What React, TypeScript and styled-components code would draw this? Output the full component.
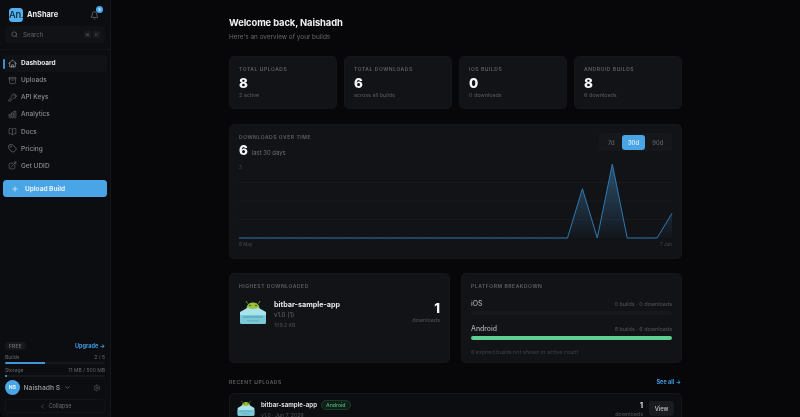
import React from "react";
import styled, { createGlobalStyle } from "styled-components";
import { Search, Bell, Plus, ChevronDown, ChevronLeft, Tag } from "lucide-react";
import {
  HiOutlineHome,
  HiOutlineArchiveBox,
  HiOutlineKey,
  HiOutlineChartBar,
  HiOutlineBookOpen,
  HiOutlineArrowTopRightOnSquare,
  HiOutlineCog6Tooth,
} from "react-icons/hi2";

const Global = createGlobalStyle`
  html, body { margin: 0; padding: 0; background: #070709; overflow: hidden; height: 100%; }
  #root { height: 100%; }
  * { box-sizing: border-box; }
  body { font-family: Inter, "Noto Sans", sans-serif; -webkit-font-smoothing: antialiased; }
`;

const Shell = styled.div`
  display: flex;
  width: 800px;
  height: 417px;
  overflow: hidden;
  background: #070709;
  filter: blur(0.3px);
`;

const Sidebar = styled.aside`
  width: 111px;
  flex: none;
  height: 417px;
  display: flex;
  flex-direction: column;
  background: #0c0d10;
  border-right: 1px solid #15161a;
  border-bottom-left-radius: 6px;
`;

const Brand = styled.div`
  display: flex;
  align-items: center;
  height: 26px;
  padding: 3px 8px 0 9px;
  gap: 4px;
`;

const Logo = styled.div`
  width: 14px;
  height: 14px;
  border-radius: 3.5px;
  background: #55b0ee;
  color: #0b2236;
  font-size: 9.5px;
  font-weight: 500;
  line-height: 14px;
  text-align: center;
  letter-spacing: -0.3px;
`;

const BrandName = styled.span`
  flex: 1;
  color: #e8e8ea;
  font-size: 7.4px;
  font-weight: 700;
`;

const BellWrap = styled.div`
  position: relative;
  width: 9px;
  height: 9px;
  margin: 2px 3px 0 0;
  color: #6f7177;
  display: flex;
`;

const BellBadge = styled.span`
  position: absolute;
  top: -5px;
  right: -4px;
  width: 7px;
  height: 7px;
  border-radius: 50%;
  background: #4aa8ea;
  color: #e8f4fd;
  font-size: 4px;
  line-height: 7px;
  text-align: center;
  font-weight: 600;
`;

const SearchBox = styled.div`
  margin: 0 5px;
  height: 17px;
  display: flex;
  align-items: center;
  padding: 0 5px 0 6px;
  gap: 5px;
  background: #111216;
  border-radius: 4px;
  color: #7c7e84;
`;

const SearchLabel = styled.span`
  flex: 1;
  font-size: 6.2px;
  color: #5f6167;
`;

const Kbd = styled.span`
  width: 7px;
  height: 7px;
  margin-left: -3px;
  border-radius: 1.5px;
  background: #1a1b20;
  color: #55575c;
  font-size: 4px;
  line-height: 7px;
  text-align: center;
`;

const Divider = styled.div`
  height: 1px;
  margin-top: 6px;
  background: #14151a;
`;

const Nav = styled.nav`
  display: flex;
  flex-direction: column;
  padding: 4.5px 3px 0;
`;

const NavItem = styled.div<{ $active?: boolean }>`
  position: relative;
  height: 17.15px;
  display: flex;
  align-items: center;
  gap: 4px;
  padding-left: 5px;
  border-radius: 4px;
  font-size: 6.5px;
  font-weight: ${(p) => (p.$active ? 700 : 500)};
  color: ${(p) => (p.$active ? "#e6e6e8" : "#8a8c92")};
  background: ${(p) => (p.$active ? "#111216" : "transparent")};
  svg { width: 9px; height: 9px; flex: none; color: ${(p) => (p.$active ? "#c8c9cd" : "#72747a")}; }
`;

const ActiveMark = styled.span`
  position: absolute;
  left: 0;
  top: 4px;
  bottom: 3px;
  width: 1.5px;
  border-radius: 1px;
  background: #3d8fd0;
`;

const UploadButton = styled.button`
  margin: 6px 3px 0;
  height: 17px;
  border: none;
  border-radius: 3.5px;
  background: #4aa5e6;
  color: #e4f2fc;
  display: flex;
  align-items: center;
  gap: 6px;
  padding: 0 0 0 8px;
  font: 700 6.5px Inter, sans-serif;
`;

const SidebarFoot = styled.div`
  margin-top: auto;
  padding: 0 5px 4px;
  display: flex;
  flex-direction: column;
`;

const PlanRow = styled.div`
  display: flex;
  align-items: center;
  justify-content: space-between;
  height: 8px;
  margin-bottom: 4px;
`;

const PlanPill = styled.span`
  background: #17181c;
  color: #6c6e73;
  font-size: 4.8px;
  font-weight: 600;
  letter-spacing: 0.3px;
  line-height: 8px;
  padding: 0 4px;
  border-radius: 4px;
`;

const UpgradeLink = styled.span`
  color: #3f97d8;
  font-size: 5.6px;
  font-weight: 700;
`;

const MeterRow = styled.div`
  display: flex;
  justify-content: space-between;
  font-size: 5px;
  line-height: 7px;
  color: #67696e;
`;

const MeterTrack = styled.div`
  height: 2px;
  margin: 1px 0 3px;
  background: #17181d;
  border-radius: 1px;
  overflow: hidden;
`;

const MeterFill = styled.div`
  height: 100%;
  background: #3f97d8;
`;

const UserRow = styled.div`
  display: flex;
  align-items: center;
  height: 15px;
  margin-top: 0;
  gap: 3.5px;
  color: #85878c;
`;

const Avatar = styled.div`
  width: 15px;
  height: 15px;
  border-radius: 50%;
  background: #4aa5e6;
  color: #e4f2fc;
  font-size: 5.2px;
  font-weight: 700;
  line-height: 15px;
  text-align: center;
`;

const UserName = styled.span`
  font-size: 6.7px;
  font-weight: 600;
  color: #8c8e93;
`;

const CogSlot = styled.span`
  margin: 0 4px 0 auto;
  display: flex;
  color: #64666b;
`;

const CollapseButton = styled.div`
  margin-top: 4px;
  height: 14px;
  border: 1px solid #14151a;
  border-radius: 3.5px;
  display: flex;
  align-items: center;
  justify-content: center;
  gap: 3px;
  color: #6a6c71;
  font-size: 5.6px;
`;

const Main = styled.main`
  flex: 1;
  display: flex;
  justify-content: center;
`;

const Content = styled.div`
  width: 453px;
  padding-top: 16px;
  display: flex;
  flex-direction: column;
  & > * { flex: none; }
`;

const Title = styled.h1`
  margin: 0;
  color: #f0f0f2;
  font-size: 9.4px;
  line-height: 14px;
  font-weight: 700;
  letter-spacing: -0.1px;
`;

const Subtitle = styled.p`
  margin: 3px 0 0;
  color: #66686d;
  font-size: 6.4px;
  line-height: 9px;
`;

const StatGrid = styled.div`
  display: grid;
  grid-template-columns: repeat(4, 1fr);
  gap: 7px;
  margin-top: 14px;
`;

const Card = styled.section`
  background: #121317;
  border: 1px solid #15161a;
  border-radius: 5px;
`;

const StatCard = styled(Card)`
  height: 53px;
  padding: 9px 9px 0;
`;

const Eyebrow = styled.div`
  color: #5f6166;
  font-size: 5px;
  line-height: 7px;
  font-weight: 600;
  letter-spacing: 0.55px;
  text-transform: uppercase;
`;

const StatValue = styled.div`
  color: #f6f6f7;
  font-size: 13.4px;
  line-height: 16px;
  font-weight: 800;
  margin-top: 2px;
`;

const StatNote = styled.div`
  color: #5b5d62;
  font-size: 5.4px;
  line-height: 7px;
  margin-top: 1px;
`;

const ChartCard = styled(Card)`
  margin-top: 15px;
  height: 135px;
  padding: 9px 9px 0;
  position: relative;
`;

const ChartHead = styled.div`
  display: flex;
  justify-content: space-between;
  align-items: flex-start;
  height: 31px;
`;

const ChartTotals = styled.div`
  display: flex;
  align-items: baseline;
  gap: 4px;
  margin-top: -1px;
`;

const ChartSuffix = styled.span`
  color: #6d6f74;
  font-size: 5.9px;
`;

const RangeGroup = styled.div`
  display: grid;
  grid-template-columns: 21.5px 23px 25.5px;
  padding: 1.5px;
  margin: -1px 0 0;
  background: #16171b;
  border-radius: 4px;
`;

const RangeOption = styled.span<{ $active?: boolean }>`
  height: 15px;
  border-radius: 3px;
  text-align: center;
  font-size: 5.8px;
  line-height: 15px;
  font-weight: ${(p) => (p.$active ? 600 : 500)};
  color: ${(p) => (p.$active ? "#d6ebfa" : "#5f6166")};
  background: ${(p) => (p.$active ? "#4aa5e6" : "transparent")};
`;

const ChartSvg = styled.svg`
  display: block;
  width: 433px;
  height: 83px;
  margin-top: 0;
  overflow: visible;
`;

const AxisLabel = styled.span`
  position: absolute;
  color: #46484d;
  font-size: 4.6px;
  line-height: 6px;
`;

const AxisTop = styled(AxisLabel)`
  left: 9px;
  top: 40px;
`;

const AxisStart = styled(AxisLabel)`
  left: 9px;
  bottom: 10px;
`;

const AxisEnd = styled(AxisLabel)`
  right: 9px;
  bottom: 10px;
`;

const TwoCol = styled.div`
  display: grid;
  grid-template-columns: 221px 221px;
  justify-content: space-between;
  margin-top: 14px;
`;

const PanelCard = styled(Card)`
  height: 90px;
  padding: 9px 9px 0;
`;

const TopApp = styled.div`
  display: flex;
  align-items: flex-start;
  margin-top: 8px;
  gap: 7px;
`;

const TopAppInfo = styled.div`
  flex: 1;
  display: flex;
  flex-direction: column;
  padding-top: 2px;
`;

const AppName = styled.div`
  color: #e8e8ea;
  font-size: 7.2px;
  line-height: 10px;
  font-weight: 700;
`;

const AppVersion = styled.div`
  color: #63656a;
  font-size: 6.2px;
  line-height: 10px;
`;

const AppSize = styled.div`
  color: #4c4e53;
  font-size: 5.2px;
  line-height: 10px;
`;

const TopCount = styled.div`
  text-align: right;
  margin-top: 3px;
`;

const CountBig = styled.div`
  color: #f6f6f7;
  font-size: 13px;
  line-height: 15px;
  font-weight: 800;
`;

const CountNote = styled.div`
  color: #55575c;
  font-size: 5.4px;
  line-height: 8px;
`;

const PlatformRow = styled.div`
  display: flex;
  justify-content: space-between;
  align-items: baseline;
  margin-top: 8.5px;
  font-size: 5.4px;
  line-height: 9px;
  color: #55575c;
`;

const PlatformName = styled.span`
  color: #a8aaaf;
  font-size: 6.9px;
  font-weight: 500;
`;

const BarTrack = styled.div`
  height: 4px;
  margin-top: 2.5px;
  background: #17181c;
  border-radius: 2px;
`;

const BarFill = styled.div`
  height: 100%;
  background: #5fce90;
  border-radius: 2px;
`;

const Footnote = styled.div`
  margin-top: 9px;
  color: #3f4146;
  font-size: 5.4px;
  line-height: 7px;
`;

const SectionHead = styled.div`
  display: flex;
  justify-content: space-between;
  align-items: center;
  margin-top: 15px;
  height: 8px;
`;

const SeeAll = styled.span`
  color: #3f97d8;
  font-size: 5.6px;
  font-weight: 700;
  margin-right: 1px;
`;

const RecentRow = styled(Card)`
  margin-top: 7px;
  height: 40px;
  padding: 5px 7px 0 7px;
  display: flex;
  align-items: flex-start;
  gap: 6px;
  border-radius: 5px 5px 0 0;
  background: #0c0d10;
`;

const RecentInfo = styled.div`
  flex: 1;
`;

const RecentTitle = styled.div`
  display: flex;
  align-items: center;
  gap: 4px;
  height: 11px;
`;

const RecentName = styled.span`
  color: #dcdcde;
  font-size: 6.1px;
  font-weight: 700;
`;

const Badge = styled.span`
  border: 1px solid #173a29;
  background: #0f1f18;
  color: #49b67c;
  font-size: 5.2px;
  font-weight: 500;
  line-height: 8px;
  padding: 0 4px;
  border-radius: 5px;
`;

const RecentMeta = styled.div`
  color: #4f5156;
  font-size: 5.2px;
  line-height: 8px;
  margin-top: 1px;
`;

const RecentCount = styled.div`
  text-align: right;
  margin-top: 2px;
`;

const RecentNum = styled.div`
  color: #e8e8ea;
  font-size: 7px;
  font-weight: 700;
  line-height: 9px;
`;

const ViewButton = styled.div`
  width: 25px;
  height: 15px;
  background: #1a1b1f;
  border-radius: 3px;
  color: #c4c5c8;
  font-size: 5.8px;
  font-weight: 500;
  line-height: 15px;
  text-align: center;
  margin-top: 2px;
`;

function AppIcon({ size }: { size: number }) {
  return (
    <svg width={size} height={size} viewBox="0 0 28 28" style={{ flex: "none" }}>
      <path d="M8.5 5.5 L7 3 M19.5 5.5 L21 3" stroke="#8fb83a" strokeWidth="0.8" />
      <path d="M7.5 11 C7.5 6.5 10.5 4.5 14 4.5 C17.5 4.5 20.5 6.5 20.5 11 Z" fill="#97c23c" />
      <circle cx="11" cy="7.5" r="0.8" fill="#30400f" />
      <circle cx="17" cy="7.5" r="0.8" fill="#30400f" />
      <path d="M1 14 L9 9.5 Q14 12.5 19 9.5 L27 14 L27 24 Q27 26 25 26 L3 26 Q1 26 1 24 Z" fill="#a8e2ea" />
      <path d="M1 17 H27 V24 Q27 26 25 26 H3 Q1 26 1 24 Z" fill="#7cc8d6" />
      <rect x="4" y="18" width="20" height="2" fill="#5ba8b6" opacity="0.7" />
      <rect x="8" y="22" width="12" height="1.4" fill="#5ba8b6" opacity="0.6" />
    </svg>
  );
}

const navItems = [
  { label: "Dashboard", icon: <HiOutlineHome />, active: true },
  { label: "Uploads", icon: <HiOutlineArchiveBox /> },
  { label: "API Keys", icon: <HiOutlineKey /> },
  { label: "Analytics", icon: <HiOutlineChartBar /> },
  { label: "Docs", icon: <HiOutlineBookOpen /> },
  { label: "Pricing", icon: <Tag /> },
  { label: "Get UDID", icon: <HiOutlineArrowTopRightOnSquare /> },
];

const stats = [
  { label: "Total Uploads", value: "8", note: "2 active" },
  { label: "Total Downloads", value: "6", note: "across all builds" },
  { label: "iOS Builds", value: "0", note: "0 downloads" },
  { label: "Android Builds", value: "8", note: "6 downloads" },
];

// 30 daily values across the 433px plot
const series = [...Array(23).fill(0), 2, 0, 3, 0, 0, 0, 1];
const step = 433 / 29;
const baseY = 73;
const unit = 24.67;
const linePoints = series.map((v, i) => `${(i * step).toFixed(1)},${(baseY - v * unit).toFixed(1)}`);
const linePath = "M" + linePoints.join(" L");
const areaPath = `${linePath} L433,${baseY} L0,${baseY} Z`;

export default function App() {
  return (
    <Shell>
      <Global />
      <Sidebar>
        <Brand>
          <Logo>An.</Logo>
          <BrandName>AnShare</BrandName>
          <BellWrap>
            <Bell size={9} />
            <BellBadge>5</BellBadge>
          </BellWrap>
        </Brand>
        <SearchBox>
          <Search size={7} />
          <SearchLabel>Search</SearchLabel>
          <Kbd>⌘</Kbd>
          <Kbd>K</Kbd>
        </SearchBox>
        <Divider />
        <Nav>
          {navItems.map((n) => (
            <NavItem key={n.label} $active={n.active}>
              {n.active && <ActiveMark />}
              {n.icon}
              {n.label}
            </NavItem>
          ))}
        </Nav>
        <UploadButton>
          <Plus size={8} />
          Upload Build
        </UploadButton>
        <SidebarFoot>
          <PlanRow>
            <PlanPill>FREE</PlanPill>
            <UpgradeLink>Upgrade →</UpgradeLink>
          </PlanRow>
          <MeterRow>
            <span>Builds</span>
            <span>2 / 5</span>
          </MeterRow>
          <MeterTrack>
            <MeterFill style={{ width: "40%" }} />
          </MeterTrack>
          <MeterRow>
            <span>Storage</span>
            <span>11 MB / 500 MB</span>
          </MeterRow>
          <MeterTrack>
            <MeterFill style={{ width: "2.2%" }} />
          </MeterTrack>
          <UserRow>
            <Avatar>NS</Avatar>
            <UserName>Naishadh S</UserName>
            <ChevronDown size={7} />
            <CogSlot>
              <HiOutlineCog6Tooth size={8} />
            </CogSlot>
          </UserRow>
          <CollapseButton>
            <ChevronLeft size={7} />
            Collapse
          </CollapseButton>
        </SidebarFoot>
      </Sidebar>
      <Main>
        <Content>
          <Title>Welcome back, Naishadh</Title>
          <Subtitle>Here's an overview of your builds</Subtitle>
          <StatGrid>
            {stats.map((s) => (
              <StatCard key={s.label}>
                <Eyebrow>{s.label}</Eyebrow>
                <StatValue>{s.value}</StatValue>
                <StatNote>{s.note}</StatNote>
              </StatCard>
            ))}
          </StatGrid>
          <ChartCard>
            <ChartHead>
              <div>
                <Eyebrow>Downloads over time</Eyebrow>
                <ChartTotals>
                  <StatValue as="span">6</StatValue>
                  <ChartSuffix>last 30 days</ChartSuffix>
                </ChartTotals>
              </div>
              <RangeGroup>
                <RangeOption>7d</RangeOption>
                <RangeOption $active>30d</RangeOption>
                <RangeOption>90d</RangeOption>
              </RangeGroup>
            </ChartHead>
            <AxisTop>3</AxisTop>
            <ChartSvg viewBox="0 0 433 83">
              <defs>
                <linearGradient id="area" x1="0" y1="0" x2="0" y2="1">
                  <stop offset="0" stopColor="#4aa5e6" stopOpacity="0.42" />
                  <stop offset="1" stopColor="#4aa5e6" stopOpacity="0.02" />
                </linearGradient>
              </defs>
              {[17.5, 36, 54.5].map((y) => (
                <line key={y} x1="0" x2="433" y1={y} y2={y} stroke="#1b1c21" strokeWidth="0.7" />
              ))}
              <path d={areaPath} fill="url(#area)" />
              <path d={linePath} fill="none" stroke="#2f78b0" strokeWidth="1" strokeLinejoin="round" />
            </ChartSvg>
            <AxisStart>8 May</AxisStart>
            <AxisEnd>7 Jun</AxisEnd>
          </ChartCard>
          <TwoCol>
            <PanelCard>
              <Eyebrow>Highest Downloaded</Eyebrow>
              <TopApp>
                <AppIcon size={28} />
                <TopAppInfo>
                  <AppName>bitbar-sample-app</AppName>
                  <AppVersion>v1.0 (1)</AppVersion>
                  <AppSize>109.2 KB</AppSize>
                </TopAppInfo>
                <TopCount>
                  <CountBig>1</CountBig>
                  <CountNote>downloads</CountNote>
                </TopCount>
              </TopApp>
            </PanelCard>
            <PanelCard>
              <Eyebrow>Platform Breakdown</Eyebrow>
              <PlatformRow>
                <PlatformName>iOS</PlatformName>
                <span>0 builds · 0 downloads</span>
              </PlatformRow>
              <BarTrack />
              <PlatformRow>
                <PlatformName>Android</PlatformName>
                <span>8 builds · 6 downloads</span>
              </PlatformRow>
              <BarTrack>
                <BarFill style={{ width: "100%" }} />
              </BarTrack>
              <Footnote>6 expired builds not shown in active count</Footnote>
            </PanelCard>
          </TwoCol>
          <SectionHead>
            <Eyebrow>Recent Uploads</Eyebrow>
            <SeeAll>See all →</SeeAll>
          </SectionHead>
          <RecentRow>
            <AppIcon size={18} />
            <RecentInfo>
              <RecentTitle>
                <RecentName>bitbar-sample-app</RecentName>
                <Badge>Android</Badge>
              </RecentTitle>
              <RecentMeta>v1.0 · Jun 7, 2026</RecentMeta>
            </RecentInfo>
            <RecentCount>
              <RecentNum>1</RecentNum>
              <CountNote>downloads</CountNote>
            </RecentCount>
            <ViewButton>View</ViewButton>
          </RecentRow>
        </Content>
      </Main>
    </Shell>
  );
}
